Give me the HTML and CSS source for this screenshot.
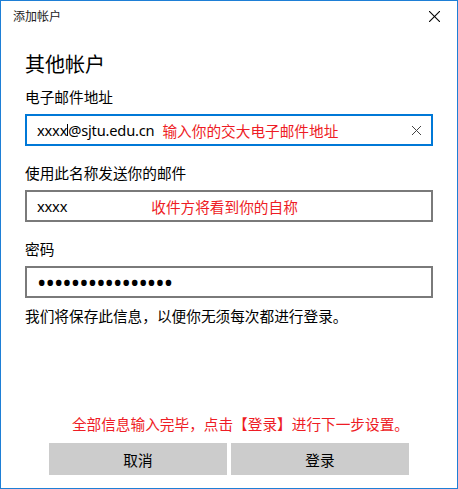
FILE: index.html
```html
<!DOCTYPE html>
<html lang="zh-CN">
<head>
  <meta charset="UTF-8">
  <meta name="viewport" content="width=device-width, initial-scale=1.0">
  <title>添加帐户</title>
  <link rel="stylesheet" href="styles.css">
</head>
<body>

  <div class="dialog">
    <div class="titlebar">
      <span class="title">添加帐户</span>
      <svg class="close" viewBox="0 0 10 10" width="11" height="11">
        <line x1="0" y1="0" x2="10" y2="10" />
        <line x1="10" y1="0" x2="0" y2="10" />
      </svg>
    </div>

    <div class="content">
      <h1 class="heading">其他帐户</h1>

      <div class="label">电子邮件地址</div>
      <div class="input focused">
        <span class="value">xxxx</span><span class="caret"></span><span class="value">@sjtu.edu.cn</span>
        <span class="hint hint-email">输入你的交大电子邮件地址</span>
        <svg class="clear" viewBox="0 0 9 9" width="9" height="9">
          <line x1="0" y1="0" x2="9" y2="9" />
          <line x1="9" y1="0" x2="0" y2="9" />
        </svg>
      </div>

      <div class="label">使用此名称发送你的邮件</div>
      <div class="input">
        <span class="value">xxxx</span>
        <span class="hint hint-name">收件方将看到你的自称</span>
      </div>

      <div class="label">密码</div>
      <div class="input">
        <span class="dots">••••••••••••••••</span>
      </div>

      <p class="info">我们将保存此信息，以便你无须每次都进行登录。</p>
    </div>

    <div class="footer">
      <p class="note">全部信息输入完毕，点击【登录】进行下一步设置。</p>
      <div class="buttons">
        <button class="btn">取消</button>
        <button class="btn">登录</button>
      </div>
    </div>
  </div>

</body>
</html>
```

FILE: styles.css
```css
body {
  margin: 0;
  padding: 0;
  background-color: #ffffff;
  font-family: "Noto Sans", "Noto Sans CJK SC", sans-serif;
  color: #000000;
}

.dialog {
  box-sizing: border-box;
  width: 458px;
  height: 489px;
  border: 1px solid #1e7fd6;
  display: flex;
  flex-direction: column;
}

.titlebar {
  height: 30px;
  display: flex;
  align-items: center;
  justify-content: space-between;
  padding: 0 17px 0 12px;
}

.title {
  font-size: 12px;
  color: #222222;
}

.close line {
  stroke: #000000;
  stroke-width: 1;
}

.content {
  padding: 0 24px;
  flex: 1;
}

.heading {
  margin: 20px 0 8px;
  font-size: 20px;
  font-weight: normal;
  line-height: 28px;
}

.label {
  font-size: 14.67px;
  line-height: 20px;
  margin-bottom: 7px;
}

.input {
  box-sizing: border-box;
  height: 32px;
  width: 408px;
  border: 2px solid #7a7a7a;
  display: flex;
  align-items: center;
  padding: 0 10px;
  font-size: 14.67px;
  margin-bottom: 17px;
}

.input.focused {
  border-color: #0078d7;
}

.value {
  white-space: pre;
  letter-spacing: -0.2px;
}

.caret {
  width: 1px;
  height: 12px;
  background-color: #000000;
}

.hint {
  color: #ee1c25;
}

.hint-email {
  margin-left: 8px;
}

.hint-name {
  margin-left: 84px;
}

.clear {
  margin-left: auto;
  margin-right: 0;
}

.clear line {
  stroke: #444444;
  stroke-width: 1;
}

.dots {
  font-size: 25px;
  letter-spacing: -0.95px;
  line-height: 20px;
}

.info {
  margin: -9px 0 0;
  font-size: 14.67px;
  line-height: 20px;
}

.footer {
  width: 360px;
  margin: 0 auto;
  padding-bottom: 13px;
}

.note {
  margin: 0 0 9px;
  text-align: right;
  color: #ee1c25;
  font-size: 14.67px;
  line-height: 20px;
}

.buttons {
  display: flex;
  gap: 4px;
}

.btn {
  flex: 1;
  height: 32px;
  border: none;
  background-color: #cccccc;
  font-family: inherit;
  font-size: 14.67px;
  color: #000000;
  padding: 0;
}
```
